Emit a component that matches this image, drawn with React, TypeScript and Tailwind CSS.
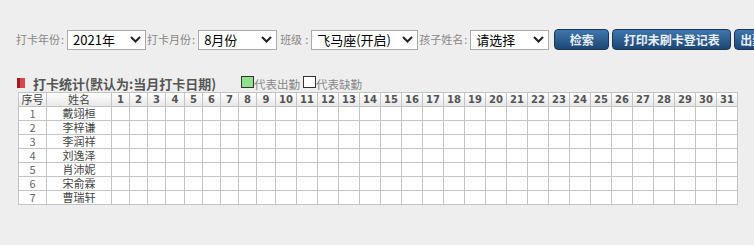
import React from 'react';

const days = Array.from({ length: 31 }, (_, i) => i + 1);

const students = ['戴翊桓', '李梓谦', '李润祥', '刘逸泽', '肖沛妮', '宋俞霖', '曹瑞轩'];

const dayWidth = (d: number) => (d < 10 ? (d === 4 || d === 9 ? 19 : 18) : 21);

const Chevron = () => (
  <svg width="11" height="7" viewBox="0 0 11 7" className="shrink-0">
    <path d="M1 1l4.5 4.5L10 1" fill="none" stroke="#222" strokeWidth="2" />
  </svg>
);

const FakeSelect: React.FC<{ value: string; width: number }> = ({ value, width }) => (
  <div
    className="flex h-[20px] shrink-0 items-center justify-between border border-[#a9a9a9] bg-white pl-[5px] pr-[4px] text-[13px] text-black"
    style={{ width }}
  >
    <span className="leading-none">{value}</span>
    <Chevron />
  </div>
);

const Label: React.FC<{ text: string; wide?: boolean }> = ({ text, wide }) => (
  <span
    className={
      wide
        ? 'ml-[3px] mr-[2px] flex shrink-0 items-center text-[11px] text-[#888] whitespace-nowrap'
        : 'ml-[1px] mr-[3px] flex shrink-0 items-center text-[11px] text-[#888] whitespace-nowrap'
    }
  >
    {text}
    <span className={wide ? 'ml-[3px] mr-[1px]' : 'ml-[1px]'}>:</span>
  </span>
);

const Btn: React.FC<{ children: React.ReactNode; width: number }> = ({ children, width }) => (
  <button
    className="h-[21px] shrink-0 rounded-[4px] border border-[#1b3556] bg-gradient-to-b from-[#3f77ad] to-[#1d4775] text-[12px] font-bold text-[#e8eef5] leading-none whitespace-nowrap"
    style={{ width }}
  >
    {children}
  </button>
);

export default function App() {
  return (
    <div className="h-[245px] w-[754px] overflow-hidden bg-[#eeeeee] font-['Noto_Sans_CJK_SC','Liberation_Sans',sans-serif]">
      <div className="flex w-[754px] items-center overflow-hidden pl-[15px] pt-[29px] whitespace-nowrap">
        <Label text="打卡年份" />
        <FakeSelect value="2021年" width={79} />
        <Label text="打卡月份" />
        <FakeSelect value="8月份" width={79} />
        <Label text="班级" wide />
        <FakeSelect value="飞马座(开启)" width={107} />
        <Label text="孩子姓名" />
        <FakeSelect value="请选择" width={79} />
        <div className="ml-[5px] flex shrink-0 gap-[3px]">
          <Btn width={55}>检索</Btn>
          <Btn width={119}>打印未刷卡登记表</Btn>
          <Btn width={60}>出勤导出</Btn>
        </div>
      </div>

      <div className="mt-[26px] flex h-[14px] items-end pl-[17px]">
        <div className="mb-[1px] flex h-[10px] w-[8px] self-center">
          <div className="w-[3px] bg-[#9e1b22]" />
          <div className="w-[5px] bg-[#d9474d]" />
        </div>
        <span className="ml-[8px] text-[13px] font-bold leading-none text-[#555]">打卡统计(默认为:当月打卡日期)</span>
        <div className="ml-[25px] h-[12px] w-[13px] self-start border border-[#333] bg-[#90e090]" />
        <span className="text-[11.5px] leading-none text-[#888]">代表出勤</span>
        <div className="ml-[3px] h-[12px] w-[13px] self-start border border-[#333] bg-white" />
        <span className="text-[11.5px] leading-none text-[#888]">代表缺勤</span>
      </div>

      <table className="ml-[18px] mt-[2px] table-fixed border-collapse border border-[#bdbdbd] bg-white text-[11px] text-[#555]">
        <colgroup>
          <col style={{ width: 28 }} />
          <col style={{ width: 65 }} />
          {days.map(d => (
            <col key={d} style={{ width: dayWidth(d) }} />
          ))}
        </colgroup>
        <thead>
          <tr className="h-[14px] bg-gradient-to-b from-white to-[#e6e6e6]">
            <th className="border border-[#c4c4c4] p-0 text-[11px] font-normal leading-[13px] text-[#444]">序号</th>
            <th className="border border-[#c4c4c4] p-0 text-[11px] font-normal leading-[13px] text-[#444]">姓名</th>
            {days.map(d => (
              <th
                key={d}
                className="border border-[#c4c4c4] p-0 font-['DejaVu_Sans',sans-serif] text-[10px] font-bold leading-[13px] text-[#555]"
              >
                {d}
              </th>
            ))}
          </tr>
        </thead>
        <tbody>
          {students.map((name, i) => (
            <tr key={name} className="h-[14px]">
              <td className="border border-[#c4c4c4] p-0 text-center leading-[13px] text-[#666]">{i + 1}</td>
              <td className="border border-[#c4c4c4] p-0 text-center leading-[13px] text-[#444]">{name}</td>
              {days.map(d => (
                <td key={d} className="border border-[#c4c4c4] p-0" />
              ))}
            </tr>
          ))}
        </tbody>
      </table>
    </div>
  );
}
